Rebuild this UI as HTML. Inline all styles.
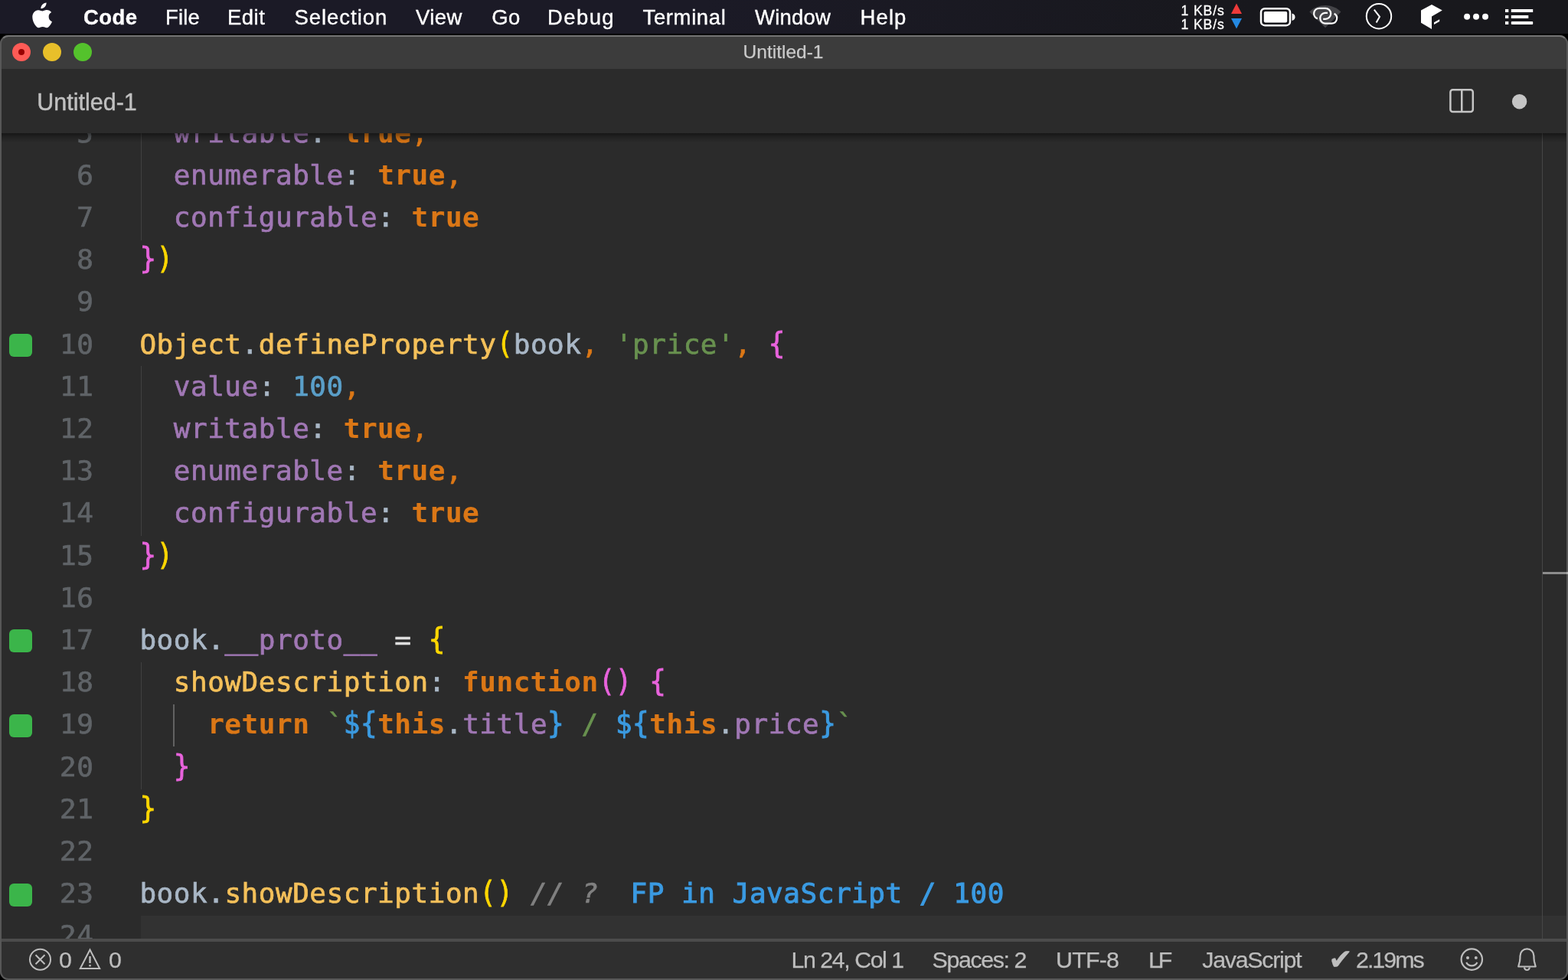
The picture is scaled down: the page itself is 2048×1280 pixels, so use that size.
<!DOCTYPE html>
<html lang="en">
<head>
<meta charset="utf-8">
<title>Untitled-1</title>
<style>
html,body{margin:0;padding:0;}
body{width:2048px;height:1280px;overflow:hidden;background:#000;position:relative;font-family:"Liberation Sans",sans-serif;}
*{box-sizing:border-box;}
.abs{position:absolute;}
/* ---------- mac menu bar ---------- */
#menubar{will-change:transform;position:absolute;left:0;top:0;width:2048px;height:44px;background:linear-gradient(90deg,#1b1a26 0%,#1b1a26 45%,#18181d 80%,#18181c 100%);color:#fff;}
#menubar .mi{-webkit-text-stroke:0.35px #fff;position:absolute;top:0.5px;height:44px;line-height:44px;font-size:27.5px;white-space:nowrap;color:#fff;}
#menubar .mi.b{font-weight:bold;}
.net{-webkit-text-stroke:0.3px #fff;position:absolute;left:1542.5px;font-size:17.6px;letter-spacing:0.9px;line-height:18px;color:#fff;white-space:nowrap;}
/* ---------- window ---------- */
#win{will-change:transform;position:absolute;left:0;top:46px;width:2048px;height:1234px;background:#2b2b2b;border-radius:11px 11px 11px 11px;overflow:hidden;}
#winborder{position:absolute;left:0;top:46px;width:2048px;height:1234px;border-radius:11px;border:2px solid #575757;border-top-color:#747474;pointer-events:none;z-index:50;border-top-width:2px;}
#titlebar{position:absolute;left:0;top:0;width:2048px;height:44px;background:#3c3c3c;}
#title{-webkit-text-stroke:0.25px;position:absolute;left:-1px;width:2048px;top:0;height:44px;line-height:44px;text-align:center;font-size:24.5px;color:#cacaca;}
.tl{position:absolute;top:10px;width:24px;height:24px;border-radius:50%;}
#tabbar{position:absolute;left:0;top:44px;width:2048px;height:84px;background:#2b2b2b;}
#tabname{-webkit-text-stroke:0.4px;position:absolute;left:48.3px;top:0;height:84px;line-height:86px;font-size:30.5px;letter-spacing:0px;color:#c0c0c0;white-space:nowrap;}
/* ---------- editor ---------- */
#editor{position:absolute;left:0;top:128px;width:2048px;height:1052px;background:#2b2b2b;overflow:hidden;}
#shadow{position:absolute;left:0;top:0;width:2048px;height:12px;background:linear-gradient(rgba(0,0,0,0.48),rgba(0,0,0,0.24) 40%,rgba(0,0,0,0));z-index:5;}
.ln{position:absolute;left:0;width:2048px;height:55.2px;line-height:55.2px;font-family:"DejaVu Sans Mono","Liberation Mono",monospace;font-size:36px;white-space:pre;}
.ln .n{position:absolute;top:-1.4px;left:0;width:122.5px;text-align:right;color:#5f6367;letter-spacing:0.52px;-webkit-text-stroke:0.7px;}
.ln .c{position:absolute;top:-1.4px;left:182.4px;letter-spacing:0.52px;color:#a9b7c6;-webkit-text-stroke:0.7px;}
.ln .g{position:absolute;left:12px;top:13.1px;width:30.4px;height:30px;border-radius:6px;background:#3bb54a;}
.p{color:#a077b4;} /* property purple */
.k{color:#db7716;font-weight:bold;-webkit-text-stroke:0.2px;} /* keyword */
.o{color:#db7716;} /* comma */
.f{color:#f4c05a;} /* function yellow */
.v{color:#a9b7c6;}
.e{color:#dedede;}
.num{color:#5a9fc9;}
.s{color:#68914f;}
.b1,.b2,.t{display:inline-block;transform:scaleY(1.08);transform-origin:50% 45px;}
.b1{color:#ffd700;}
.b2{color:#e863dc;}
.t{color:#3b9ae0;-webkit-text-stroke:0.9px;}
.cm{color:#808080;font-style:italic;}
.q{color:#3a9ae2;-webkit-text-stroke:1px;}
.guide{position:absolute;width:1px;background:#414141;}
/* ---------- status bar ---------- */
#status{position:absolute;left:0;top:1180px;width:2048px;height:54px;background:#2f2f2f;border-top:4px solid #4c4c4c;}
#status .si{-webkit-text-stroke:0.25px;position:absolute;top:0.2px;height:46px;line-height:46px;font-size:30.4px;color:#bdbdbd;white-space:nowrap;}
</style>
</head>
<body>
<div id="menubar">
  <svg class="abs" style="left:41px;top:3px" width="30" height="38" viewBox="0 0 30 38"><path fill="#fff" d="M19.6 0.6c0.2 1.7-0.5 3.4-1.5 4.6-1.1 1.3-2.8 2.2-4.4 2.1-0.2-1.7 0.6-3.4 1.6-4.5C16.400 1.500 18.200 0.700 19.600 0.600zM25.100 11.500c-0.200 0.100-2.900 1.700-2.900 5.100 0 3.900 3.400 5.300 3.500 5.300 0 0.100-0.500 1.900-1.800 3.700-1.100 1.600-2.200 3.200-4 3.200-1.700 0-2.300-1-4.300-1-2 0-2.600 1-4.200 1.100-1.700 0.100-3-1.700-4.100-3.300C5 22.300 3.200 16.300 5.600 12.300c1.100-2 3.200-3.200 5.400-3.300 1.700 0 3.300 1.100 4.300 1.100 1 0 3-1.400 5-1.200C21.200 9 23.600 9.300 25.100 11.500z" transform="translate(-4.060 -0.300) scale(1.204 1.1625)"/></svg>
  <span class="mi b" id="m0" style="left:109px;letter-spacing:0.43px">Code</span>
  <span class="mi" id="m1" style="left:216px;letter-spacing:0.2px">File</span>
  <span class="mi" id="m2" style="left:297px;letter-spacing:0.47px">Edit</span>
  <span class="mi" id="m3" style="left:384.5px;letter-spacing:0.95px">Selection</span>
  <span class="mi" id="m4" style="left:543px;letter-spacing:0.4px">View</span>
  <span class="mi" id="m5" style="left:642.3px;letter-spacing:0.3px">Go</span>
  <span class="mi" id="m6" style="left:715px;letter-spacing:1.4px">Debug</span>
  <span class="mi" id="m7" style="left:839.5px;letter-spacing:0.63px">Terminal</span>
  <span class="mi" id="m8" style="left:986px;letter-spacing:0.2px">Window</span>
  <span class="mi" id="m9" style="left:1123.6px;letter-spacing:1.07px">Help</span>
  <span class="net" id="n1" style="top:5px">1 KB/s</span>
  <span class="net" id="n2" style="top:23px">1 KB/s</span>
  <svg class="abs" style="left:1600px;top:0" width="448" height="44" viewBox="1600 0 448 44">
    <polygon points="1608,18 1615,4.500 1622,18" fill="#ee3a3a"/>
    <polygon points="1608,24 1615,37.500 1622,24" fill="#2489e2"/>
    <rect x="1647" y="11.200" width="38" height="22" rx="5" ry="5" fill="none" stroke="#fff" stroke-width="2.500"/>
    <rect x="1650.800" y="15" width="30.400" height="14.400" rx="1.800" fill="#fff"/>
    <path d="M1687.500 17.500c2.800 0.600 4 2.300 4 4.700s-1.200 4.100-4 4.700z" fill="#fff"/>
    <path d="M1710.300 15.500C1721.500 4.100 1740.500 4.100 1751.400 15.500L1731 36.200z" fill="#444448"/>
    <path d="M1720.800 24.400A7 7 0 0 1 1723.200 10.800L1731.200 10.800A7 7 0 0 1 1731.200 24.800L1728.200 24.800" fill="none" stroke="#fff" stroke-width="2.200"/>
    <path d="M1734 16.850L1730.600 16.850A6.900 6.900 0 0 0 1730.600 30.600L1739.200 30.600A6.900 6.900 0 0 0 1742.650 17.700" fill="none" stroke="#fff" stroke-width="2.200"/>
    <circle cx="1801" cy="21.200" r="16.200" fill="none" stroke="#fff" stroke-width="2"/>
    <path d="M1794.800 12.600L1802 21.800L1797.600 29.600" fill="none" stroke="#fff" stroke-width="2"/>
    <path d="M1856 13.600L1870 5.900L1883.800 13.600L1870 21.400L1870 38L1856 29.800z" fill="#fff"/>
    <path d="M1873 29.200L1880.200 25.300L1880.200 28L1873 32z" fill="#fff"/>
    <circle cx="1916.100" cy="21.800" r="4" fill="#fff"/><circle cx="1928" cy="21.800" r="4" fill="#fff"/><circle cx="1940" cy="21.800" r="4" fill="#fff"/>
    <rect x="1966" y="12" width="4.300" height="4" fill="#fff"/><rect x="1966" y="20" width="4.300" height="4" fill="#fff"/><rect x="1966" y="28" width="4.300" height="4" fill="#fff"/>
    <rect x="1973.800" y="12" width="28.400" height="4" fill="#fff"/><rect x="1973.800" y="20" width="22.500" height="4" fill="#fff"/><rect x="1973.800" y="28" width="28.400" height="4" rx="1" fill="#fff"/>
  </svg>
</div>
<div id="win">
  <div id="titlebar">
    <div class="tl" style="left:16px;background:#fe5b56;"></div>
    <div class="abs" style="left:24px;top:18px;width:8px;height:8px;border-radius:50%;background:#990000;"></div>
    <div class="tl" style="left:56px;background:#e8bf2a;"></div>
    <div class="tl" style="left:96px;background:#54c22c;"></div>
    <div id="title">Untitled-1</div>
  </div>
  <div id="tabbar">
    <div id="tabname">Untitled-1</div>
    <svg class="abs" style="left:1880px;top:20px" width="140" height="50" viewBox="1880 110 140 50">
      <rect x="1894.400" y="117.200" width="29.400" height="28.800" rx="3" fill="none" stroke="#c5c5c5" stroke-width="2.500"/>
      <rect x="1908" y="117" width="2.500" height="29" fill="#c5c5c5"/>
      <circle cx="1984.600" cy="132.700" r="9.700" fill="#c5c5c5"/>
    </svg>
  </div>
  <div id="editor">
    <div class="abs" style="left:184px;top:1021.7px;width:1864px;height:55.2px;background:#323232;"></div>
    <div class="guide" style="left:184px;top:0;height:139.5px;"></div>
    <div class="guide" style="left:184px;top:304.1px;height:221.8px;"></div>
    <div class="guide" style="left:184px;top:690.5px;height:166.6px;"></div>
    <div class="guide" style="left:225.800px;top:745.7px;height:55.2px;width:2px;background:#626262;"></div>
    <div class="abs" style="left:2014px;top:0;width:1px;height:1052px;background:#464646;"></div>
    <div class="abs" style="left:2015px;top:572.800px;width:33px;height:3.700px;background:#8c8c8c;"></div>
    <div class="ln" style="top:-27.1px"><span class="n">5</span><span class="c">  <span class="p">writable</span>: <span class="k">true</span><span class="o">,</span></span></div>
    <div class="ln" style="top:28.1px"><span class="n">6</span><span class="c">  <span class="p">enumerable</span>: <span class="k">true</span><span class="o">,</span></span></div>
    <div class="ln" style="top:83.3px"><span class="n">7</span><span class="c">  <span class="p">configurable</span>: <span class="k">true</span></span></div>
    <div class="ln" style="top:138.5px"><span class="n">8</span><span class="c"><span class="b2">}</span><span class="b1">)</span></span></div>
    <div class="ln" style="top:193.7px"><span class="n">9</span></div>
    <div class="ln" style="top:248.9px"><i class="g"></i><span class="n">10</span><span class="c"><span class="f">Object</span>.<span class="f">defineProperty</span><span class="b1">(</span>book<span class="o">,</span> <span class="s">'price'</span><span class="o">,</span> <span class="b2">{</span></span></div>
    <div class="ln" style="top:304.1px"><span class="n">11</span><span class="c">  <span class="p">value</span>: <span class="num">100</span><span class="o">,</span></span></div>
    <div class="ln" style="top:359.3px"><span class="n">12</span><span class="c">  <span class="p">writable</span>: <span class="k">true</span><span class="o">,</span></span></div>
    <div class="ln" style="top:414.5px"><span class="n">13</span><span class="c">  <span class="p">enumerable</span>: <span class="k">true</span><span class="o">,</span></span></div>
    <div class="ln" style="top:469.7px"><span class="n">14</span><span class="c">  <span class="p">configurable</span>: <span class="k">true</span></span></div>
    <div class="ln" style="top:524.9px"><span class="n">15</span><span class="c"><span class="b2">}</span><span class="b1">)</span></span></div>
    <div class="ln" style="top:580.1px"><span class="n">16</span></div>
    <div class="ln" style="top:635.3px"><i class="g"></i><span class="n">17</span><span class="c">book.<span class="p">__proto__</span> <span class="e">=</span> <span class="b1">{</span></span></div>
    <div class="ln" style="top:690.5px"><span class="n">18</span><span class="c">  <span class="f">showDescription</span>: <span class="k">function</span><span class="b2">()</span> <span class="b2">{</span></span></div>
    <div class="ln" style="top:745.7px"><i class="g"></i><span class="n">19</span><span class="c">    <span class="k">return</span> <span class="s">`</span><span class="t">${</span><span class="k">this</span>.<span class="p">title</span><span class="t">}</span><span class="s"> / </span><span class="t">${</span><span class="k">this</span>.<span class="p">price</span><span class="t">}</span><span class="s">`</span></span></div>
    <div class="ln" style="top:800.9px"><span class="n">20</span><span class="c">  <span class="b2">}</span></span></div>
    <div class="ln" style="top:856.1px"><span class="n">21</span><span class="c"><span class="b1">}</span></span></div>
    <div class="ln" style="top:911.3px"><span class="n">22</span></div>
    <div class="ln" style="top:966.5px"><i class="g"></i><span class="n">23</span><span class="c">book.<span class="f">showDescription</span><span class="b1">()</span> <span class="cm">// ?</span>  <span class="q" style="margin-left:-2.5px">FP in JavaScript / 100</span></span></div>
    <div class="ln" style="top:1021.7px"><span class="n">24</span></div>
    <div id="shadow"></div>
  </div>
  <div id="status">
    <svg class="abs" style="left:30px;top:0" width="140" height="46" viewBox="30 1230 140 46">
      <circle cx="52.500" cy="1253.200" r="13.500" fill="none" stroke="#bdbdbd" stroke-width="2"/>
      <path d="M46.500 1247.200L58.500 1259.200M58.500 1247.200L46.500 1259.200" stroke="#bdbdbd" stroke-width="2" fill="none"/>
      <path d="M117.500 1240.500L130.200 1265H104.800z" fill="none" stroke="#bdbdbd" stroke-width="2" stroke-linejoin="miter"/>
      <rect x="116.300" y="1249" width="2.400" height="9" fill="#bdbdbd"/><rect x="116.300" y="1260" width="2.400" height="2.400" fill="#bdbdbd"/>
    </svg>
    <span class="si" id="s0" style="left:77px">0</span>
    <span class="si" id="s1" style="left:142px">0</span>
    <span class="si" id="s2" style="left:1033.5px;letter-spacing:-1.47px">Ln 24, Col 1</span>
    <span class="si" id="s3" style="left:1217.6px;letter-spacing:-1.41px">Spaces: 2</span>
    <span class="si" id="s4" style="left:1379px;letter-spacing:-0.79px">UTF-8</span>
    <span class="si" id="s5" style="left:1500px;letter-spacing:-4.1px">LF</span>
    <span class="si" id="s6" style="left:1570.3px;letter-spacing:-1.28px">JavaScript</span>
    <span class="si" id="s7" style="left:1735px;font-family:'DejaVu Sans',sans-serif;font-size:38px">✔</span>
    <span class="si" id="s8" style="left:1771px;letter-spacing:-2.0px">2.19ms</span>
    <svg class="abs" style="left:1900px;top:0" width="120" height="46" viewBox="1900 1230 120 46">
      <circle cx="1922.300" cy="1253.100" r="13.700" fill="none" stroke="#bdbdbd" stroke-width="2.200"/>
      <circle cx="1917" cy="1251" r="2" fill="#bdbdbd"/><circle cx="1927.800" cy="1251" r="2" fill="#bdbdbd"/>
      <path d="M1915.200 1257c1.500 3 4 4.400 7.100 4.400s5.600-1.400 7.100-4.400" fill="none" stroke="#bdbdbd" stroke-width="2.200"/>
      <path d="M1983.200 1262.500L1985 1255.500C1985.400 1253 1985.500 1250.500 1985.500 1248.400A8.950 8.950 0 0 1 2003.400 1248.400C2003.400 1250.500 2003.500 1253 2003.900 1255.500L2005.700 1262.500Z" fill="none" stroke="#bdbdbd" stroke-width="2.200" stroke-linejoin="round"/>
      <path d="M1991 1263.600a3.400 3.400 0 0 0 6.800 0" fill="none" stroke="#bdbdbd" stroke-width="2.200"/>
    </svg>
  </div>
</div>
<div id="winborder"></div>
<div class="abs" style="left:2046px;top:746.800px;width:2px;height:3.700px;background:#a8a8a8;z-index:60;"></div>
</body>
</html>
